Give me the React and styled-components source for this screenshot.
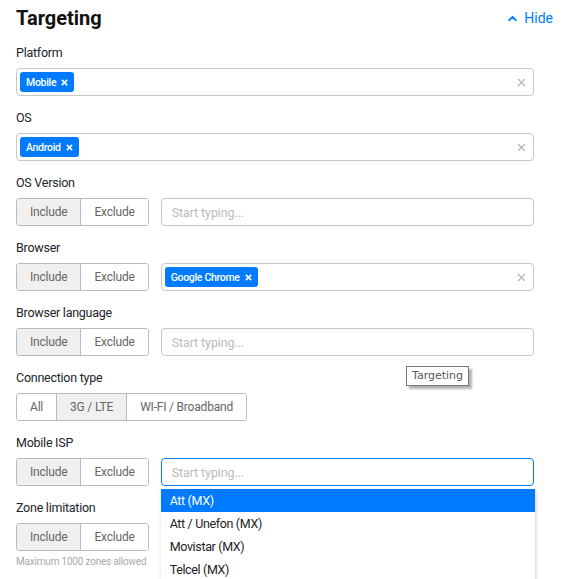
import React from 'react';
import styled, { createGlobalStyle } from 'styled-components';
import { ChevronUp } from 'lucide-react';

const GlobalStyle = createGlobalStyle`
  body {
    margin: 0;
    background: #fff;
    font-family: Roboto, "Liberation Sans", sans-serif;
    color: #212529;
  }
`;

const Panel = styled.div`
  position: relative;
  padding: 0 28px 0 16px;
  height: 579px;
  overflow: hidden;
`;

const Header = styled.div`
  display: flex;
  align-items: center;
  justify-content: space-between;
  height: 36px;
  margin: 0 -19px 8px 0;
`;

const Title = styled.h2`
  margin: 0;
  font-size: 20px;
  font-weight: 700;
  color: #111;
`;

const HideLink = styled.a`
  display: flex;
  align-items: center;
  gap: 5px;
  font-size: 14px;
  color: #007bff;
  cursor: pointer;
`;

const Section = styled.div`
  margin-bottom: 13px;
`;

const Label = styled.div`
  font-size: 12.5px;
  letter-spacing: -0.25px;
  line-height: 16px;
  padding-top: 1px;
  margin-bottom: 7px;
`;

const Row = styled.div`
  display: flex;
  gap: 12px;
`;

const Toggle = styled.div`
  display: flex;
  height: 28px;
  box-sizing: border-box;
  border: 1px solid #bbb;
  border-radius: 3px;
  overflow: hidden;
  flex-shrink: 0;
`;

const ToggleButton = styled.div`
  display: flex;
  align-items: center;
  justify-content: center;
  padding: 0 13px;
  font-size: 12px;
  letter-spacing: -0.2px;
  color: #666;
  background: ${(p) => (p.$active ? '#f0f0f0' : '#fff')};
  & + & {
    border-left: 1px solid #bbb;
  }
`;

const Box = styled.div`
  position: relative;
  flex: 1;
  display: flex;
  align-items: center;
  gap: 4px;
  height: 28px;
  box-sizing: border-box;
  border: 1px solid ${(p) => (p.$focused ? '#007bff' : '#c8c8c8')};
  border-radius: 4px;
  padding: 0 7px 0 3px;
`;

const Placeholder = styled.span`
  padding-left: 7px;
  font-size: 12.5px;
  letter-spacing: -0.1px;
  color: #bbb;
`;

const Chip = styled.span`
  display: inline-flex;
  align-items: center;
  gap: 5px;
  height: 20px;
  padding: 0 6px;
  border-radius: 3px;
  background: #007bff;
  color: #fff;
  font-size: 10.5px;
  letter-spacing: -0.3px;
  font-weight: 500;
`;

const Clear = styled.span`
  margin-left: auto;
  display: flex;
`;

const Hint = styled.div`
  margin-top: 5px;
  font-size: 10px;
  letter-spacing: -0.2px;
  line-height: 12px;
  color: #aaa;
`;

const Menu = styled.div`
  position: absolute;
  top: 30px;
  left: -1px;
  right: -2px;
  background: #fff;
  box-shadow: 1px 2px 4px rgba(0, 0, 0, 0.2);
  z-index: 2;
`;

const MenuItem = styled.div`
  height: 23px;
  display: flex;
  align-items: center;
  padding: 0 9px;
  font-size: 12.5px;
  letter-spacing: -0.35px;
  color: ${(p) => (p.$active ? '#fff' : '#222')};
  background: ${(p) => (p.$active ? '#007bff' : '#fff')};
`;

const Tooltip = styled.div`
  position: absolute;
  left: 406px;
  top: 366px;
  padding: 2px 5px 3px;
  border: 1px solid #767676;
  background: #fff;
  font-family: "DejaVu Sans", sans-serif;
  font-size: 11px;
  color: #575757;
  box-shadow: 3px 3px 2px rgba(0, 0, 0, 0.3);
`;

const XIcon = ({ size = 8, color = '#fff', width = 1.6 }) => (
  <svg width={size} height={size} viewBox="0 0 8 8">
    <path d="M1 1L7 7M7 1L1 7" stroke={color} strokeWidth={width} />
  </svg>
);

const IncludeExclude = () => (
  <Toggle>
    <ToggleButton $active>Include</ToggleButton>
    <ToggleButton>Exclude</ToggleButton>
  </Toggle>
);

const TagBox = ({ tags }) => (
  <Box>
    {tags.map((t) => (
      <Chip key={t}>
        {t}
        <XIcon size={7} width={1.8} />
      </Chip>
    ))}
    <Clear>
      <XIcon size={9} color="#aaa" width={1} />
    </Clear>
  </Box>
);

const isps = ['Att (MX)', 'Att / Unefon (MX)', 'Movistar (MX)', 'Telcel (MX)'];

export default function App() {
  return (
    <>
      <GlobalStyle />
      <Panel>
        <Header>
          <Title>Targeting</Title>
          <HideLink>
            <ChevronUp size={13} strokeWidth={3.5} />
            Hide
          </HideLink>
        </Header>

        <Section>
          <Label>Platform</Label>
          <TagBox tags={['Mobile']} />
        </Section>

        <Section>
          <Label>OS</Label>
          <TagBox tags={['Android']} />
        </Section>

        <Section>
          <Label>OS Version</Label>
          <Row>
            <IncludeExclude />
            <Box>
              <Placeholder>Start typing...</Placeholder>
            </Box>
          </Row>
        </Section>

        <Section>
          <Label>Browser</Label>
          <Row>
            <IncludeExclude />
            <TagBox tags={['Google Chrome']} />
          </Row>
        </Section>

        <Section>
          <Label>Browser language</Label>
          <Row>
            <IncludeExclude />
            <Box>
              <Placeholder>Start typing...</Placeholder>
            </Box>
          </Row>
        </Section>

        <Section>
          <Label>Connection type</Label>
          <Row>
            <Toggle>
              <ToggleButton>All</ToggleButton>
              <ToggleButton $active>3G / LTE</ToggleButton>
              <ToggleButton>WI-FI / Broadband</ToggleButton>
            </Toggle>
          </Row>
        </Section>

        <Section>
          <Label>Mobile ISP</Label>
          <Row>
            <IncludeExclude />
            <Box $focused>
              <Placeholder>Start typing...</Placeholder>
              <Menu>
                {isps.map((name, i) => (
                  <MenuItem key={name} $active={i === 0}>
                    {name}
                  </MenuItem>
                ))}
              </Menu>
            </Box>
          </Row>
        </Section>

        <Section>
          <Label>Zone limitation</Label>
          <Row>
            <IncludeExclude />
          </Row>
          <Hint>Maximum 1000 zones allowed</Hint>
        </Section>

        <Tooltip>Targeting</Tooltip>
      </Panel>
    </>
  );
}
